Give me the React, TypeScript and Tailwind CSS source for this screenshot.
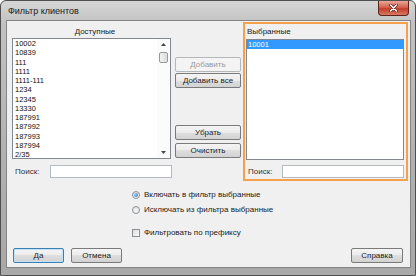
import clsx from 'clsx';

const available = ['10002', '10839', '111', '1111', '1111-111', '1234', '12345', '13330', '187991', '187992', '187993', '187994', '2/35'];

function Btn({ label, disabled, focused, className }: { label: string; disabled?: boolean; focused?: boolean; className?: string }) {
  return (
    <div
      className={clsx(
        'flex h-[15px] items-center justify-center rounded-[2px] border text-[8px] leading-none',
        disabled
          ? 'border-[#b5b8bb] bg-[#f4f4f4] text-[#9a9a9a]'
          : 'bg-[linear-gradient(#f4f4f4,#ececec_50%,#dedede_50%,#d2d2d2)] text-[#1e1e1e]',
        !disabled && (focused ? 'border-[#3c7fb1] shadow-[inset_0_0_0_1px_#bfe2f8]' : 'border-[#7a7a7a]'),
        className
      )}
    >
      {label}
    </div>
  );
}

function SearchRow({ labelWidth, pad }: { labelWidth: string; pad: string }) {
  return (
    <div className="flex h-[13px] items-center">
      <span className={clsx('text-[8px] leading-none text-[#333]', labelWidth, pad)}>Поиск:</span>
      <div className="h-[13px] w-[122px] border border-[#b5b9c0] bg-white" />
    </div>
  );
}

function Radio({ checked, label }: { checked?: boolean; label: string }) {
  return (
    <div className="flex h-[15px] items-center">
      <span className="flex h-[8px] w-[8px] items-center justify-center rounded-full border border-[#8a8f96] bg-[linear-gradient(#e2e2e2,#fafafa)]">
        {checked && <span className="h-[4px] w-[4px] rounded-full bg-[radial-gradient(circle_at_35%_35%,#9fd3fb,#1f67b8)]" />}
      </span>
      <span className="ml-[4px] text-[8px] leading-none text-[#222]">{label}</span>
    </div>
  );
}

export default function App() {
  return (
    <div className="h-[276px] w-[416px] overflow-hidden font-['Liberation_Sans',Arial,sans-serif]">
      <div className="flex h-[276px] w-[416px] flex-col rounded-t-[6px] border border-[#4f4f4f] bg-[linear-gradient(#d6d6d6,#c2c2c2_8%,#b0b0b0_60%,#a8a8a8)] pb-[8px] pl-[6px] pr-[5px]">
        {/* title bar */}
        <div className="relative flex h-[20px] items-center">
          <span className="pl-[1px] text-[9px] leading-none text-[#1b1b1b]">Фильтр клиентов</span>
          <div className="absolute right-[1px] top-0 flex h-[15px] w-[31px] items-center justify-center rounded-b-[4px] border border-t-0 border-[#5e241b] bg-[linear-gradient(#eaa797,#d76250_45%,#c23d2a_55%,#d87a63)]">
            <svg width="9" height="8" viewBox="0 0 9 8">
              <path d="M1.5 1 L7.5 7 M7.5 1 L1.5 7" stroke="#5a1d14" strokeWidth="3" strokeLinecap="round" />
              <path d="M1.5 1 L7.5 7 M7.5 1 L1.5 7" stroke="#ffffff" strokeWidth="1.6" strokeLinecap="round" />
            </svg>
          </div>
        </div>

        {/* client area */}
        <div className="flex h-[246px] w-[403px] flex-col bg-[#f0f0f0] shadow-[0_0_0_1px_#858585]">
          <div className="flex h-[161px]">
            {/* available */}
            <div className="ml-[5px] flex w-[160px] flex-col">
              <div className="h-[17px] pt-[6px] pl-[6px] text-center text-[8px] leading-[9px] text-[#222]">Доступные</div>
              <div className="flex h-[121px] w-[159px] border border-[#828790] bg-white">
                <div className="flex-1 pl-[2px] text-[7.5px] leading-[9.25px] text-[#111]">
                  {available.map((v) => (
                    <div key={v}>{v}</div>
                  ))}
                </div>
                <div className="flex w-[13px] flex-col items-center bg-[#fbfbfb]">
                  <div className="flex h-[11px] items-center justify-center">
                    <svg width="5" height="3" viewBox="0 0 5 3"><path d="M0 3 L2.5 0 L5 3 Z" fill="#444" /></svg>
                  </div>
                  <div className="mt-[2px] h-[11px] w-[9px] rounded-[2px] border border-[#9a9a9a] bg-[linear-gradient(90deg,#f2f2f2,#dcdcdc)]" />
                  <div className="flex-1" />
                  <div className="flex h-[11px] items-center justify-center">
                    <svg width="5" height="3" viewBox="0 0 5 3"><path d="M0 0 L2.5 3 L5 0 Z" fill="#444" /></svg>
                  </div>
                </div>
              </div>
              <div className="mt-[6px]">
                <SearchRow labelWidth="w-[38px]" pad="pl-[3px]" />
              </div>
            </div>

            {/* buttons */}
            <div className="ml-[3px] flex w-[66px] flex-col pt-[36px]">
              <Btn label="Добавить" disabled />
              <Btn label="Добавить все" className="mt-[1px]" />
              <Btn label="Убрать" className="mt-[37px]" />
              <Btn label="Очистить" className="mt-[3px]" />
            </div>

            {/* selected */}
            <div className="ml-[2px] mt-[1px] flex h-[159px] w-[165px] flex-col border-2 border-[#f5a04a] pl-[1px] pr-[2px]">
              <div className="h-[15px] pl-[1px] pt-[3px] text-[8px] leading-[9px] text-[#222]">Выбранные</div>
              <div className="h-[121px] w-[158px] border border-[#828790] bg-white">
                <div className="h-[9px] bg-[#3399ff] pl-[1px] text-[7.5px] leading-[9px] text-white">10001</div>
              </div>
              <div className="mt-[5px]">
                <SearchRow labelWidth="w-[36px]" pad="pl-[2px]" />
              </div>
            </div>
          </div>

          {/* options */}
          <div className="mt-[5px] flex flex-col pl-[125px]">
            <Radio checked label="Включать в фильтр выбранные" />
            <Radio label="Исключать из фильтра выбранные" />
            <div className="mt-[8px] flex h-[15px] items-center">
              <span className="h-[8px] w-[8px] border border-[#8a8f96] bg-[linear-gradient(135deg,#dcdcdc,#fafafa)]" />
              <span className="ml-[4px] text-[8px] leading-none text-[#222]">Фильтровать по префиксу</span>
            </div>
          </div>

          {/* bottom buttons */}
          <div className="mt-[8px] flex pl-[6px] pr-[7px]">
            <Btn label="Да" focused className="w-[51px]" />
            <Btn label="Отмена" className="ml-[7px] w-[51px]" />
            <Btn label="Справка" className="ml-auto w-[52px]" />
          </div>
        </div>
      </div>
    </div>
  );
}
